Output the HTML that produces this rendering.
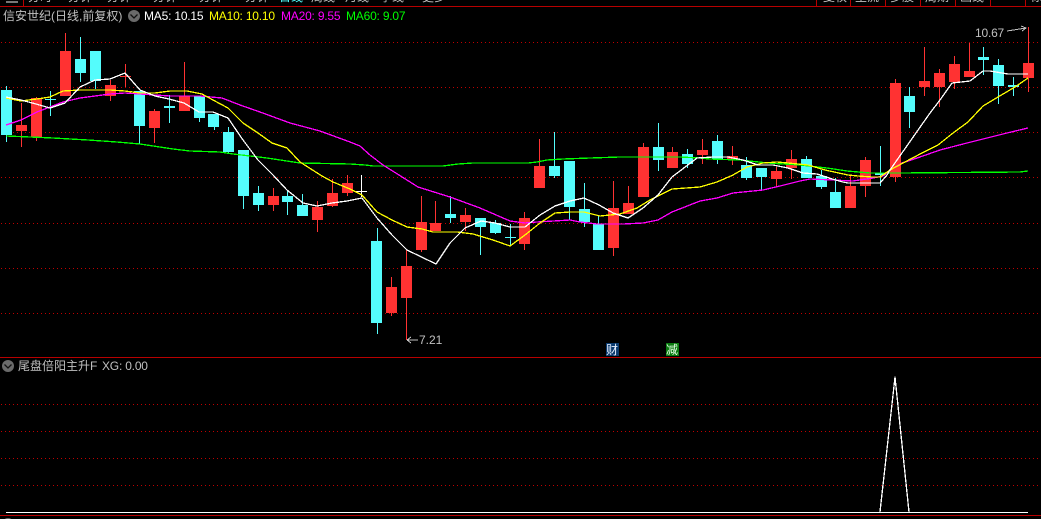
<!DOCTYPE html>
<html lang="zh">
<head>
<meta charset="utf-8">
<title>信安世纪</title>
<style>
html,body{margin:0;padding:0;background:#000;}
body{width:1041px;height:519px;overflow:hidden;position:relative;font-family:"Liberation Sans","WenQuanYi Zen Hei","Noto Sans CJK SC",sans-serif;}
svg{position:absolute;left:0;top:0;}
.t{position:absolute;white-space:nowrap;font-size:12px;line-height:14px;color:#c0c0c0;}
.m{letter-spacing:-0.2px;}
#top{position:absolute;left:0;top:0;width:1041px;height:6px;overflow:hidden;}
#top span{position:absolute;top:-10px;font-size:12px;line-height:14px;color:#c0c0c0;white-space:nowrap;}
</style>
</head>
<body>
<div id="top">
<span style="left:28px">分时</span><span style="left:68px">分钟</span><span style="left:107px">分钟</span><span style="left:153px">分钟</span><span style="left:199px">分钟</span><span style="left:245px">分钟</span><span style="left:279px;color:#54fcfc">日线</span><span style="left:311px">周线</span><span style="left:345px">月线</span><span style="left:380px">季线</span><span style="left:422px">更多</span>
<span style="left:823px">复权</span><span style="left:855px">主流</span><span style="left:890px">多股</span><span style="left:925px">周期</span><span style="left:960px">画线</span><span style="left:1030px">标</span>
</div>
<svg width="1041" height="519" viewBox="0 0 1041 519" xmlns="http://www.w3.org/2000/svg">
<g stroke="#c00000" stroke-width="1" stroke-dasharray="1 3" fill="none" shape-rendering="crispEdges">
<path d="M1 42.5H1041M1 87.5H1041M1 132.5H1041M1 177.5H1041M1 223.5H1041M1 268.5H1041M1 313.5H1041M1 404.5H1041M1 431.5H1041M1 458.5H1041M1 485.5H1041"/>
</g>
<g stroke="#b80000" stroke-width="1" fill="none" shape-rendering="crispEdges">
<path d="M0 6.5H1041M0 357.5H1041M0 515.5H1041"/>
<path d="M23.5 0V6M816.5 0V6M850.5 0V6M885.5 0V6M920.5 0V6M955.5 0V6M990.5 0V6M1025.5 0V6"/>
</g>
<rect x="6" y="1" width="12" height="2" fill="#777"/>
<!-- wicks -->
<g fill="none" stroke-width="1" shape-rendering="crispEdges">
<path stroke="#ff3232" d="M21.5 103V147M36.5 97V141M65.5 33V96M110.5 80V101M125.5 64V87M154.5 109V143M184.5 62V111M273.5 188V211M317.5 201V232M332.5 179V207M347.5 175V196M391.5 277V316M406.5 250V340M421.5 196V252M435.5 201V231M465.5 208V231M524.5 212V250M539.5 139V188M613.5 181V256M628.5 186V214M643.5 143V197M672.5 147V168M702.5 139V164M732.5 146V165M776.5 167V186M791.5 150V179M850.5 175V186M865.5 157V197M895.5 79V182M924.5 47V96M939.5 69V107M954.5 56V89M969.5 43V77M1028.5 27V92"/>
<path stroke="#54fcfc" d="M6.5 86V142M50.5 91V116M80.5 37V82M95.5 51V89M139.5 91V144M169.5 95V123M199.5 96V122M214.5 114V130M228.5 127V154M243.5 150V209M258.5 186V211M287.5 191V215M302.5 194V216M377.5 228V334M450.5 196V223M480.5 218V255M495.5 220V234M510.5 224V246M554.5 132V178M569.5 161V220M584.5 183V227M598.5 216V250M658.5 123V171M687.5 149V168M717.5 135V164M746.5 157V180M761.5 168V190M806.5 156V178M821.5 170V189M835.5 178V208M880.5 146V186M909.5 87V128M983.5 47V75M998.5 59V104M1013.5 77V96"/>
<path stroke="#ffffff" d="M361.5 175V197"/>
</g>
<!-- bodies -->
<path fill="#ff3232" shape-rendering="crispEdges" d="M16 125h11v6h-11zM31 98h11v39h-11zM60 51h11v45h-11zM105 85h11v11h-11zM120 76h11v1h-11zM149 111h11v17h-11zM179 96h11v15h-11zM268 196h11v9h-11zM312 207h11v13h-11zM327 193h11v13h-11zM342 183h11v10h-11zM386 287h11v26h-11zM401 266h11v32h-11zM416 222h11v28h-11zM430 223h11v8h-11zM460 215h11v7h-11zM519 218h11v26h-11zM534 166h11v22h-11zM608 208h11v40h-11zM623 203h11v11h-11zM638 147h11v50h-11zM667 152h11v16h-11zM697 150h11v5h-11zM727 156h11v3h-11zM771 171h11v8h-11zM786 159h11v9h-11zM845 186h11v22h-11zM860 160h11v26h-11zM890 83h11v94h-11zM919 81h11v6h-11zM934 73h11v14h-11zM949 64h11v18h-11zM964 71h11v6h-11zM1023 63h11v15h-11z"/>
<path fill="#54fcfc" shape-rendering="crispEdges" d="M1 90h11v45h-11zM45 99h11v1h-11zM75 59h11v14h-11zM90 51h11v30h-11zM134 91h11v35h-11zM164 106h11v2h-11zM194 96h11v22h-11zM208 114h11v13h-11zM223 132h11v20h-11zM238 150h11v46h-11zM253 193h11v12h-11zM282 196h11v6h-11zM297 205h11v11h-11zM371 241h11v82h-11zM445 214h11v4h-11zM475 218h11v9h-11zM490 223h11v10h-11zM505 237h11v1h-11zM549 166h11v10h-11zM564 161h11v46h-11zM579 209h11v13h-11zM593 224h11v26h-11zM653 147h11v13h-11zM682 154h11v10h-11zM712 141h11v18h-11zM741 165h11v13h-11zM756 168h11v9h-11zM801 159h11v19h-11zM816 176h11v11h-11zM830 192h11v16h-11zM875 173h11v2h-11zM904 96h11v16h-11zM978 57h11v3h-11zM993 65h11v21h-11zM1008 85h11v2h-11z"/>
<path fill="#ffffff" shape-rendering="crispEdges" d="M356 191h11v1h-11z"/>
<!-- MA lines -->
<g fill="none" stroke-width="1.3" shape-rendering="crispEdges" stroke-linejoin="round">
<polyline stroke="#00ff00" points="6,136 30,137 53,138 88,140 117,142 140,144 173,149 190,151 220,152 233,154 267,158 300,163 350,164 365,165 373,166 443,166 458,164 473,163 528,163 537,162 547,160 563,159 590,158 620,157 650,157 680,157 700,158 710,159 740,160 768,163 800,165 827,168 847,171 870,173 900,173 1020,172 1028,171"/>
<polyline stroke="#ff00ff" points="6,125 21,120 37,112 50,107 63,102 80,98 95,96 110,94 125,93 140,94 170,96 200,96 222,98 240,105 260,112 290,123 320,131 350,142 360,146 370,155 383,165 399,175 418,187 450,197 480,208 510,221 525,223 537,222 570,220 580,222 597,224 623,224 643,223 658,220 672,212 700,201 717,198 733,193 743,192 753,191 763,190 780,186 800,181 810,179 833,180 853,181 873,178 883,176 890,170 902,163 920,157 940,150 967,143 983,139 1007,133 1028,128"/>
<polyline stroke="#ffff00" points="6,98 21,101 37,99 50,97 63,91 80,90 110,90 125,91 140,93 155,93 170,91 187,91 202,94 213,100 228,108 243,123 258,133 272,143 287,148 300,162 322,176 333,182 350,189 362,195 377,212 392,220 407,227 422,229 433,232 457,232 473,234 493,240 510,246 525,235 540,223 555,213 570,212 584,212 600,216 620,214 637,208 650,200 672,189 700,187 717,182 733,175 747,167 763,163 777,162 788,163 808,165 825,170 848,175 858,176 872,177 880,177 890,170 903,163 922,153 938,145 953,133 968,122 983,106 998,97 1015,87 1028,78"/>
<polyline stroke="#ffffff" points="6,97 21,100 36,104 50,108 65,103 80,87 95,80 110,79 125,73 140,90 155,96 169,99 184,103 199,112 213,112 228,118 243,140 258,160 273,175 287,190 303,203 317,206 332,203 347,201 362,198 377,218 392,235 407,250 436,264 450,243 465,228 481,221 495,223 510,227 525,227 540,215 555,206 570,201 584,198 599,205 613,213 628,218 643,208 658,195 672,177 697,158 713,157 728,157 743,160 758,165 773,165 788,168 803,173 817,174 832,179 843,182 848,183 880,183 887,175 890,170 930,113 940,100 952,83 970,81 983,71 990,71 1008,74 1028,74"/>
<polyline stroke="#ffffff" points="880,512 895,377 909,512"/>
<path stroke="#ffffff" stroke-width="1" d="M6 512.5H1028"/>
</g>
<!-- price arrows -->
<g fill="none" stroke="#c0c0c0" stroke-width="1" shape-rendering="crispEdges">
<path d="M1007 31L1026 28M1021 26L1026 28L1022 31"/>
<path d="M407 340H418M407 340L411 337M407 340L411 343"/>
</g>
<!-- chevron circles -->
<circle cx="134" cy="16" r="6" fill="#6a6a6a"/>
<path d="M130.5 14.5L134 18L137.5 14.5" fill="none" stroke="#111" stroke-width="1.3"/>
<circle cx="8" cy="366" r="6" fill="#6a6a6a"/>
<path d="M4.5 364.5L8 368L11.5 364.5" fill="none" stroke="#111" stroke-width="1.3"/>
<circle cx="8" cy="524" r="6" fill="#6a6a6a"/>
<rect x="606" y="343" width="13" height="13" fill="#0a3a6e"/>
<rect x="666" y="343" width="13" height="13" fill="#0a7a10"/>
</svg>
<div class="t" style="left:3px;top:9px;">信安世纪(日线,前复权)</div>
<div class="t m" style="left:144px;top:9px;color:#fff;">MA5: 10.15</div>
<div class="t m" style="left:209px;top:9px;color:#ffff00;">MA10: 10.10</div>
<div class="t m" style="left:281px;top:9px;color:#ff00ff;">MA20: 9.55</div>
<div class="t m" style="left:346px;top:9px;color:#00ff00;">MA60: 9.07</div>
<div class="t m" style="left:975px;top:26px;">10.67</div>
<div class="t" style="left:419px;top:333px;">7.21</div>
<div class="t" style="left:606px;top:343px;color:#e8f0ff;">财</div>
<div class="t" style="left:666px;top:343px;color:#e8ffe8;">减</div>
<div class="t" style="left:18px;top:359px;">尾盘倍阳主升F</div>
<div class="t m" style="left:102px;top:359px;">XG: 0.00</div>
</body>
</html>
